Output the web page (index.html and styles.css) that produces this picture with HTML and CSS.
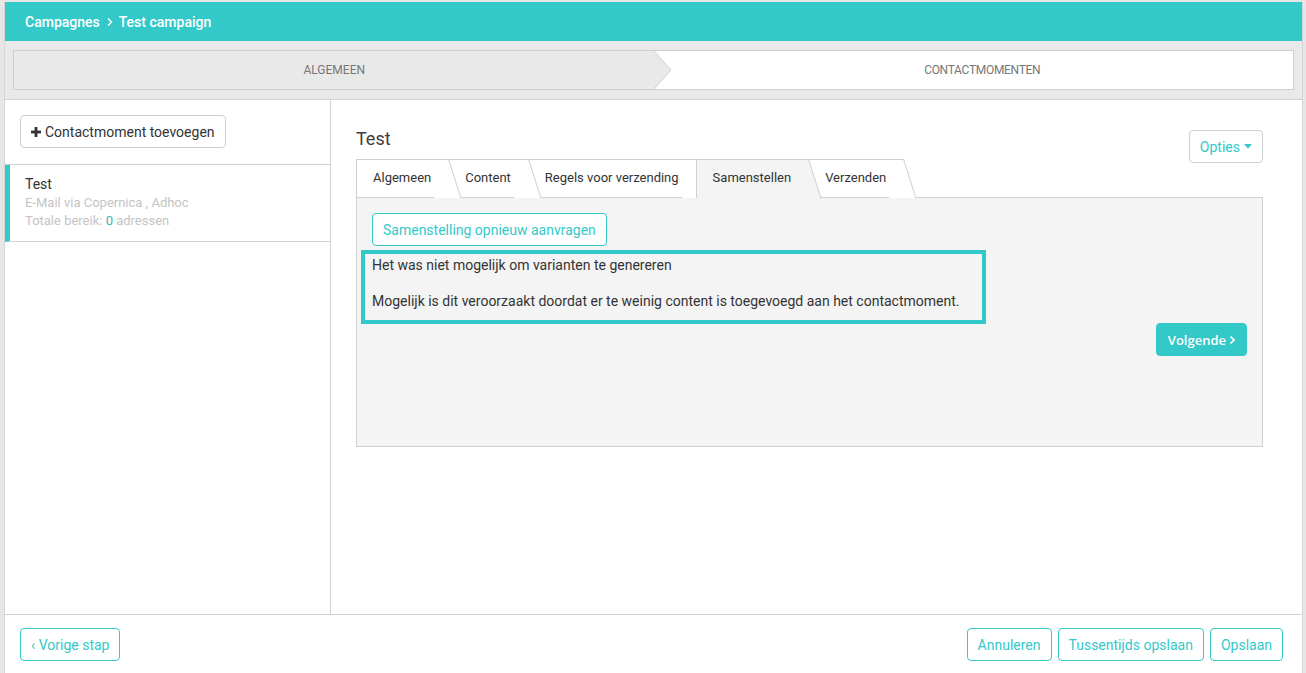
FILE: index.html
```html
<!DOCTYPE html>
<html lang="nl">
<head>
<meta charset="utf-8">
<title>Test campaign</title>
<link rel="stylesheet" href="styles.css">
</head>
<body>
<div class="app">
  <header class="topbar">
    <span class="crumb">Campagnes</span>
    <svg class="crumb-sep" width="8" height="10" viewBox="0 0 8 10"><path d="M2 1.5 L5.5 5 L2 8.5" fill="none" stroke="#fff" stroke-width="1.4"/></svg>
    <span class="crumb">Test campaign</span>
  </header>

  <div class="stepper-wrap">
    <div class="stepper">
      <div class="step step-done">
        <span>ALGEMEEN</span>
        <svg class="chevron" width="18" height="38" viewBox="0 0 18 38"><polygon points="0,0 17,19 0,38" fill="#e9e9e9"/><polyline points="0,0 17,19 0,38" fill="none" stroke="#cfcfcf" stroke-width="1"/></svg>
      </div>
      <div class="step step-current"><span>CONTACTMOMENTEN</span></div>
    </div>
  </div>

  <div class="body">
    <aside class="sidebar">
      <div class="side-top">
        <button class="btn btn-default"><svg class="plus" width="10" height="10" viewBox="0 0 10 10"><rect x="3.6" y="0" width="2.8" height="10" fill="#333"/><rect x="0" y="3.6" width="10" height="2.8" fill="#333"/></svg>Contactmoment toevoegen</button>
      </div>
      <div class="side-item">
        <div class="item-title">Test</div>
        <div class="item-meta">E-Mail via Copernica , Adhoc</div>
        <div class="item-meta">Totale bereik: <span class="count">0</span> adressen</div>
      </div>
    </aside>

    <main class="main">
      <div class="main-head">
        <h1 class="title">Test</h1>
        <button class="btn btn-outline btn-opties">Opties <svg width="8" height="5" viewBox="0 0 8 5"><polygon points="0,0 8,0 4,4.5" fill="#33c9c9"/></svg></button>
      </div>
      <nav class="tabs">
        <div class="tab t1">Algemeen</div>
        <div class="tab t2">Content</div>
        <div class="tab t3">Regels voor verzending</div>
        <div class="tab t4 active">Samenstellen</div>
        <div class="tab t5">Verzenden</div>
      </nav>
      <section class="panel">
        <button class="btn btn-outline btn-request">Samenstelling opnieuw aanvragen</button>
        <div class="notice">
          <p class="notice-line">Het was niet mogelijk om varianten te genereren</p>
          <p class="notice-line notice-second">Mogelijk is dit veroorzaakt doordat er te weinig content is toegevoegd aan het contactmoment.</p>
        </div>
        <div class="panel-actions">
          <button class="btn btn-primary">Volgende <svg width="7" height="10" viewBox="0 0 7 10"><path d="M1.5 1.5 L5 5 L1.5 8.5" fill="none" stroke="#fff" stroke-width="1.7"/></svg></button>
        </div>
      </section>
    </main>
  </div>

  <footer class="footer">
    <button class="btn btn-outline">&lsaquo; Vorige stap</button>
    <div class="footer-right">
      <button class="btn btn-outline">Annuleren</button>
      <button class="btn btn-outline">Tussentijds opslaan</button>
      <button class="btn btn-outline">Opslaan</button>
    </div>
  </footer>
</div>
</body>
</html>
```

FILE: styles.css
```css
* { box-sizing: border-box; }

html, body {
  margin: 0;
  height: 100%;
}

body {
  background: #e6e6e6;
  padding: 2px 3px 0 4px;
  font-family: Roboto, "Liberation Sans", Arial, sans-serif;
  font-size: 14px;
  color: #333;
}

.app {
  height: calc(100vh - 2px);
  display: flex;
  flex-direction: column;
  background: #fff;
  border-left: 1px solid #d6d6d6;
  border-right: 1px solid #d6d6d6;
}

.topbar {
  height: 39px;
  flex: none;
  background: #33c9c9;
  color: #fff;
  display: flex;
  align-items: center;
  padding-left: 20px;
  font-size: 14px;
  font-weight: 500;
}

.crumb-sep {
  margin: 0 5px 0 6px;
}

.stepper-wrap {
  flex: none;
  height: 59px;
  background: #e9e9e9;
  border-bottom: 1px solid #d2d2d2;
  padding: 9px 8px;
}

.stepper {
  height: 40px;
  border: 1px solid #cfcfcf;
  display: flex;
  background: #fff;
}

.step {
  display: flex;
  align-items: center;
  justify-content: center;
  font-size: 12px;
  color: #777;
}

.step-done {
  flex: 0 0 50.08%;
  background: #e9e9e9;
  position: relative;
}

.chevron {
  position: absolute;
  right: -17px;
  top: 0;
  z-index: 1;
}

.step-current {
  flex: 1;
  padding-left: 17px;
  letter-spacing: -0.3px;
}

.body {
  flex: 1;
  display: flex;
  min-height: 0;
}

.sidebar {
  width: 326px;
  flex: none;
  border-right: 1px solid #d2d2d2;
}

.side-top {
  padding: 15px 15px 16px 15px;
  border-bottom: 1px solid #d2d2d2;
}

.btn {
  font-family: Roboto, "Liberation Sans", Arial, sans-serif;
  font-size: 14px;
  height: 33px;
  padding: 0 10px;
  border-radius: 4px;
  background: #fff;
  cursor: pointer;
  display: inline-flex;
  align-items: center;
}

.btn-default {
  border: 1px solid #cfcfcf;
  color: #333;
}

.plus {
  margin-right: 4px;
}

.btn-outline {
  border: 1px solid #33c9c9;
  color: #33c9c9;
}

.btn-primary {
  border: 1px solid #33c9c9;
  background: #33c9c9;
  color: #fff;
  font-family: "Open Sans", "DejaVu Sans", sans-serif;
  font-weight: 600;
  font-size: 13px;
  padding: 0 10px 0 11px;
}

.btn-primary svg {
  margin-left: 3px;
}

.side-item {
  border-left: 5px solid #33c9c9;
  border-bottom: 1px solid #d2d2d2;
  padding: 9px 15px 11px 15px;
}

.item-title {
  line-height: 20px;
  font-size: 14px;
  color: #333;
}

.item-meta {
  line-height: 18px;
  font-size: 13px;
  color: #c4c4c4;
}

.count {
  color: #2fbaba;
}

.main {
  flex: 1;
  padding: 28px 39px 0 25px;
}

.main-head {
  height: 31px;
  display: flex;
  justify-content: space-between;
  align-items: flex-start;
}

.title {
  margin: 1px 0 0;
  font-size: 18px;
  font-weight: 400;
  line-height: 20px;
  color: #46393f;
}

.btn-opties {
  margin-top: 2px;
  border-color: #cfcfcf;
  padding: 0 10px 0 10px;
  position: relative;
  z-index: 20;
}

.btn-opties svg {
  margin-left: 4px;
}

.tabs {
  display: flex;
  height: 38px;
  align-items: flex-start;
}

.tab {
  position: relative;
  height: 38px;
  padding: 0 17px 2px 16px;
  display: flex;
  align-items: center;
  font-size: 13px;
  color: #333;
  background: #fff;
  border-top: 1px solid #cfcfcf;
  border-left: 1px solid #cfcfcf;
}

.tab::after {
  content: "";
  position: absolute;
  z-index: -1;
  top: -1px;
  right: -1px;
  width: 26px;
  height: 38px;
  background: inherit;
  border-top: 1px solid #cfcfcf;
  border-right: 1px solid #cfcfcf;
  transform: skewX(17.5deg);
  transform-origin: top right;
}

.t1 { z-index: 5; }
.t2 { z-index: 4; }
.t3 { z-index: 3; }
.t4 { z-index: 10; }
.t5 { z-index: 1; }

.tab.active {
  background: #f4f4f4;
  height: 39px;
  padding-bottom: 3px;
}

.tab.active::after {
  height: 39px;
}

.panel {
  height: 250px;
  background: #f4f4f4;
  border: 1px solid #cfcfcf;
  padding: 15px 15px 0 15px;
}

.btn-request {
  height: 33px;
  padding: 0 10px;
}

.notice {
  width: 625px;
  margin: 4px 0 0 -11px;
  border: 4px solid #33c9c9;
  padding: 1px 7px 9px 7px;
}

.notice-line {
  margin: 0;
  line-height: 20px;
  font-size: 14px;
  color: #333;
}

.notice-second {
  margin-top: 16px;
}

.panel-actions {
  display: flex;
  justify-content: flex-end;
  margin-top: -1px;
}

.footer {
  flex: none;
  height: 59px;
  border-top: 1px solid #d2d2d2;
  padding: 13px 19px 0 15px;
  display: flex;
  justify-content: space-between;
  align-items: flex-start;
}

.footer-right {
  display: flex;
  gap: 6px;
}
```
